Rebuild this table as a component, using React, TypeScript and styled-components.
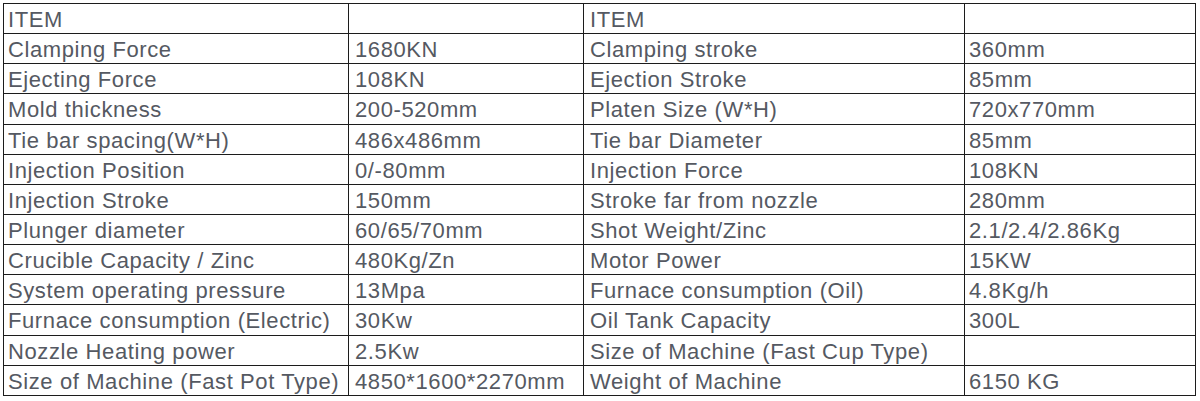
import React from "react";
import styled, { createGlobalStyle } from "styled-components";

const Global = createGlobalStyle`
  html, body { margin: 0; padding: 0; background: #ffffff; }
  body { font-family: "Liberation Sans", Arial, sans-serif; }
`;

const Page = styled.div`
  padding: 3px 0 0 3px;
`;

const Table = styled.div`
  display: grid;
  grid-template-columns: 345px 235px 381px 231px;
  grid-template-rows: repeat(13, 30.15px);
  width: 1193px;
  border-top: 1px solid #1c1c1c;
  border-left: 1px solid #1c1c1c;
  box-sizing: border-box;
`;

const Cell = styled.div<{ $pad?: number }>`
  display: flex;
  align-items: center;
  box-sizing: border-box;
  border-right: 1px solid #1c1c1c;
  border-bottom: 1px solid #1c1c1c;
  padding: 3px 0 0 ${(p) => p.$pad ?? 5}px;
  font-size: 22px;
  letter-spacing: 0.6px;
  color: #555962;
  white-space: nowrap;
  overflow: hidden;
  line-height: 1;
`;

const rows: [string, string, string, string][] = [
  ["ITEM", "", "ITEM", ""],
  ["Clamping Force", "1680KN", "Clamping stroke", "360mm"],
  ["Ejecting Force", "108KN", "Ejection Stroke", "85mm"],
  ["Mold thickness", "200-520mm", "Platen Size (W*H)", "720x770mm"],
  ["Tie bar spacing(W*H)", "486x486mm", "Tie bar Diameter", "85mm"],
  ["Injection Position", "0/-80mm", "Injection Force", "108KN"],
  ["Injection Stroke", "150mm", "Stroke far from nozzle", "280mm"],
  ["Plunger diameter", "60/65/70mm", "Shot Weight/Zinc", "2.1/2.4/2.86Kg"],
  ["Crucible Capacity / Zinc", "480Kg/Zn", "Motor Power", "15KW"],
  ["System operating pressure", "13Mpa", "Furnace consumption (Oil)", "4.8Kg/h"],
  ["Furnace consumption (Electric)", "30Kw", "Oil Tank Capacity", "300L"],
  ["Nozzle Heating power", "2.5Kw", "Size of Machine (Fast Cup Type)", ""],
  ["Size of Machine (Fast Pot Type)", "4850*1600*2270mm", "Weight of Machine", "6150 KG"],
];

const pads = [4, 6, 6, 4];

export default function App() {
  return (
    <>
      <Global />
      <Page>
        <Table>
          {rows.map((r, i) =>
            r.map((c, j) => (
              <Cell key={`${i}-${j}`} $pad={pads[j]}>
                {c}
              </Cell>
            ))
          )}
        </Table>
      </Page>
    </>
  );
}
